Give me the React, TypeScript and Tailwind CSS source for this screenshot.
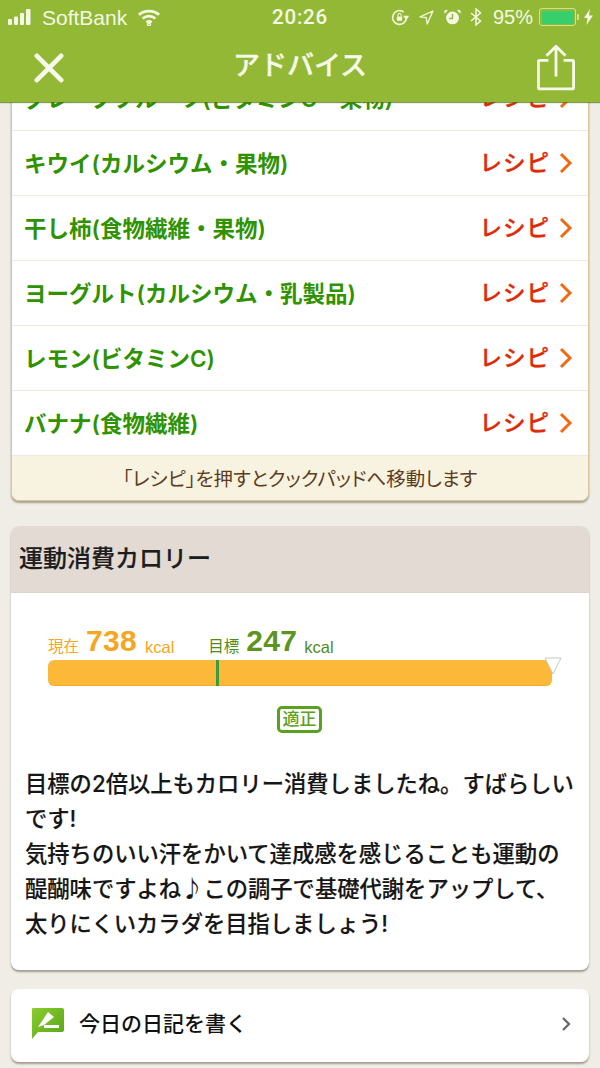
const JP = "font-['Liberation_Sans','Noto_Sans_CJK_JP',sans-serif]";
const JPM = "font-['Inter','Noto_Sans_CJK_JP',sans-serif]";

const rows = [
  "グレープフルーツ(ビタミンC・果物)",
  "キウイ(カルシウム・果物)",
  "干し柿(食物繊維・果物)",
  "ヨーグルト(カルシウム・乳製品)",
  "レモン(ビタミンC)",
  "バナナ(食物繊維)",
];

function Signal() {
  return (
    <svg width="24" height="16" viewBox="0 0 24 16" fill="#f4f8e4">
      <rect x="0" y="10" width="4" height="6" rx="1" />
      <rect x="6" y="7.5" width="4" height="8.5" rx="1" />
      <rect x="12" y="4" width="4" height="12" rx="1" />
      <rect x="18" y="0" width="4.500" height="16" rx="1" />
    </svg>
  );
}

function Wifi() {
  return (
    <svg width="24" height="17" viewBox="0 0 22 16" fill="none" stroke="#f4f8e4" strokeWidth="2.6">
      <path d="M1.5 5.5C6.5.8 15.500.8 20.500 5.500" />
      <path d="M5 9c3.500-3 8.500-3 12 0" />
      <path d="M8.500 12.500c1.500-1 3.500-1 5 0" />
      <circle cx="11" cy="14.500" r="0.700" />
    </svg>
  );
}

function StatusRight() {
  return (
    <div className="flex items-center">
      <svg width="19" height="19" viewBox="0 0 18 18" fill="none" stroke="#f4f8e4" strokeWidth="1.500" className="mr-[10px]">
        <path d="M15.500 9A6.500 6.500 0 1 1 13 3.900" />
        <path d="M16.800 8l-1.300 2-1.700-2z" fill="#f4f8e4" />
        <rect x="6.500" y="8" width="5" height="4" rx="0.500" fill="#f4f8e4" stroke="none" />
        <path d="M7.500 8V6.800a1.500 1.500 0 0 1 3 0V8" strokeWidth="1" />
      </svg>
      <svg width="15" height="15" viewBox="0 0 15 15" fill="none" stroke="#f4f8e4" strokeWidth="1.300" className="mr-[10px]">
        <path d="M14 1 1 6.800l6.200.8L8.200 14z" strokeLinejoin="round" />
      </svg>
      <svg width="17" height="18" viewBox="0 0 18 18" fill="#f4f8e4" className="mr-[9px]">
        <circle cx="9" cy="10" r="6.800" />
        <path d="M1 5.300 4 2a2 2 0 0 0-3 3.300zM17 5.300 14 2a2 2 0 0 1 3 3.300z" />
        <path d="M9 5.500V10.500H5.500" fill="none" stroke="#93b835" strokeWidth="1.500" />
      </svg>
      <svg width="12" height="18" viewBox="0 0 12 18" fill="none" stroke="#f4f8e4" strokeWidth="1.500" className="mr-[11px]">
        <path d="M1 5l9.500 8L6 17V1l4.500 4L1 13" />
      </svg>
      <span className="text-[20px] leading-none text-[#f4f8e4] mr-[6px] font-['Liberation_Sans',sans-serif]">95%</span>
      <div className="w-[37px] h-[18px] border border-[#d5e08e] rounded-[3px] p-[1.500px] mr-[1px]">
        <div className="w-full h-full bg-[#37cf6b] rounded-[2px]" />
      </div>
      <div className="w-[2px] h-[6px] bg-[#d5e08e] rounded-r-[1px] mr-[5px]" />
      <svg width="9" height="16" viewBox="0 0 9 16" fill="#f4f8e4" className="mr-[7px]">
        <path d="M6 0 0 9h3.500L2.500 16 9 6.500H5z" />
      </svg>
    </div>
  );
}

function Header() {
  return (
    <header className="relative z-10 h-[102px] bg-[#93b835] shadow-[0_1px_1px_rgba(80,110,20,0.7)] shrink-0 text-[#f7faea]">
      <div className="relative flex items-center justify-between h-[34px] pl-[8px]">
        <div className="flex items-center">
          <Signal />
          <span className="ml-[10px] mr-[10px] text-[21px] leading-none font-['Liberation_Sans',sans-serif] text-[#f4f8e4]">SoftBank</span>
          <Wifi />
        </div>
        <span className="absolute left-[272px] top-[7px] text-[20.500px] leading-[20px] font-medium tracking-[0.8px] font-['Roboto',sans-serif] text-[#f4f8e4]">20:26</span>
        <StatusRight />
      </div>
      <div className="relative flex items-center justify-between h-[68px] pl-[34px] pr-[25px]">
        <svg width="30" height="30" viewBox="0 0 32 32" stroke="#f7faea" strokeWidth="5" strokeLinecap="round">
          <path d="M3 3 29 29M29 3 3 29" />
        </svg>
        <span className={`absolute inset-x-0 top-[12px] text-center text-[27px] leading-[40px] font-medium [-webkit-text-stroke:0.3px] text-[#f7faea] ${JP}`}>アドバイス</span>
        <svg width="38" height="46" viewBox="0 0 40 48" fill="none" stroke="#f7faea" strokeWidth="3" strokeLinejoin="round" className="mt-[-1px]">
          <path d="M12 16H3a1.500 1.500 0 0 0-1.500 1.500v27A1.500 1.500 0 0 0 3 46h34a1.500 1.500 0 0 0 1.500-1.500v-27A1.500 1.500 0 0 0 37 16h-9" />
          <path d="M20 33V2M10 11l10-10 10 10" />
        </svg>
      </div>
    </header>
  );
}

function RecipeCard() {
  return (
    <section className="mx-[11px] -mt-[36px] bg-white rounded-b-[8px] border-x border-b border-[#d9c69b] shadow-[0_2px_2px_rgba(110,100,70,0.55)]">
      {rows.map((r) => (
        <div key={r} className="flex items-center justify-between h-[65px] border-b border-[#ece9df] pl-[12px] pr-[15px]">
          <span className={`pt-[2px] text-[22.500px] leading-[30px] font-semibold text-[#2f9200] ${JPM}`}>{r}</span>
          <div className="flex items-center">
            <span className={`pt-[2px] text-[22.500px] font-medium [-webkit-text-stroke:0.35px] tracking-[1px] text-[#df2a06] ${JP}`}>レシピ</span>
            <svg width="14" height="22" viewBox="0 0 14 22" fill="none" stroke="#ef6a14" strokeWidth="3" className="ml-[9px]">
              <path d="M2 2l9 9-9 9" />
            </svg>
          </div>
        </div>
      ))}
      <div className={`h-[44px] pt-[3px] rounded-b-[8px] bg-[#f8f3e0] flex items-center justify-center text-[19.500px] text-[#5e3d1e] [font-feature-settings:'palt'] ${JP}`}>
        「レシピ」を押すとクックパッドへ移動します
      </div>
    </section>
  );
}

function CalorieCard() {
  return (
    <section className="mx-[11px] mt-[25px] bg-white rounded-[8px] shadow-[0_2px_2px_rgba(110,105,90,0.6)]">
      <div className={`h-[67px] rounded-t-[8px] bg-[#e3dad4] border-b border-[#dcd5ce] flex items-center pl-[8px] text-[24px] font-medium [-webkit-text-stroke:0.2px] text-[#1d1d1d] ${JP}`}>
        運動消費カロリー
      </div>
      <div className="pt-[32px] px-[37px]">
        <div className={`flex items-end h-[32px] ${JP}`}>
          <span className="text-[15.500px] leading-[20px] text-[#f5a623]">現在</span>
          <span className="ml-[7px] text-[30px] leading-[32px] font-bold text-[#f5a623] tracking-[0.3px]">738</span>
          <span className="ml-[8px] text-[16.500px] leading-[20px] text-[#f5a623]">kcal</span>
          <span className="ml-[34px] text-[15.500px] leading-[20px] text-[#4f8c1c]">目標</span>
          <span className="ml-[7px] text-[30px] leading-[32px] font-bold text-[#5c9420] tracking-[0.3px]">247</span>
          <span className="ml-[7px] text-[16.500px] leading-[20px] text-[#4f8c1c]">kcal</span>
        </div>
        <div className="relative mt-[3px] h-[26px] w-[504px] rounded-[6px] bg-[#fcb838] border-b border-[#f8aa1c]">
          <div className="absolute left-[168px] top-0 bottom-[-1px] w-[3px] bg-[#3f9a3c]" />
          <svg width="18" height="18" viewBox="0 0 18 18" className="absolute right-[-10px] top-[-3px]" fill="#fff" stroke="#c9c9c0" strokeWidth="1">
            <path d="M1 1h16L9 17z" />
          </svg>
        </div>
        <div className="flex justify-center mt-[20px] pr-[1px]">
          <span className={`w-[45px] h-[27px] border-[3px] border-[#5aa021] rounded-[5px] flex items-center justify-center text-[17px] leading-none font-medium text-[#5aa021] ${JP}`}>適正</span>
        </div>
      </div>
      <p className={`mt-[33px] pl-[14px] pr-[8px] pb-[29px] text-[22.300px] leading-[35px] font-medium [-webkit-text-stroke:0.15px] text-[#161616] ${JPM}`}>
        目標の2倍以上もカロリー消費しましたね。すばらしい<br />
        です!<br />
        気持ちのいい汗をかいて達成感を感じることも運動の<br />
        醍醐味ですよね<span className="leading-none font-['Noto_Sans_CJK_JP',sans-serif]">♪</span>この調子で基礎代謝をアップして、<br />
        太りにくいカラダを目指しましょう!
      </p>
    </section>
  );
}

function DiaryCard() {
  return (
    <section className="mx-[11px] mt-[19px] h-[73px] shrink-0 bg-white rounded-[8px] shadow-[0_2px_2px_rgba(110,105,90,0.6)] flex items-center pl-[21px] pr-[18px]">
      <svg width="32" height="31" viewBox="0 0 32 31" className="mb-[4px]">
        <defs>
          <linearGradient id="g" x1="0" y1="0" x2="1" y2="1">
            <stop offset="0" stopColor="#8ccc2e" />
            <stop offset="1" stopColor="#55a518" />
          </linearGradient>
        </defs>
        <path d="M1 0h29a2 2 0 0 1 2 2v20a2 2 0 0 1-2 2H6l-6 7V1a1 1 0 0 1 1-1z" fill="url(#g)" />
        <path d="M6 19 16 4l6 5-10 8z" fill="#fff" />
        <rect x="12" y="17" width="15" height="3" fill="#fff" />
      </svg>
      <span className={`ml-[15px] mb-[3px] text-[21px] font-medium text-[#111] ${JP}`}>今日の日記を書く</span>
      <svg width="10" height="16" viewBox="0 0 10 16" fill="none" stroke="#666" strokeWidth="2.200" className="ml-auto mb-[3px]">
        <path d="M2 2l6 6-6 6" />
      </svg>
    </section>
  );
}

export default function App() {
  return (
    <div className="w-[600px] h-[1068px] overflow-hidden bg-[#efede5] flex flex-col">
      <Header />
      <RecipeCard />
      <CalorieCard />
      <DiaryCard />
    </div>
  );
}
